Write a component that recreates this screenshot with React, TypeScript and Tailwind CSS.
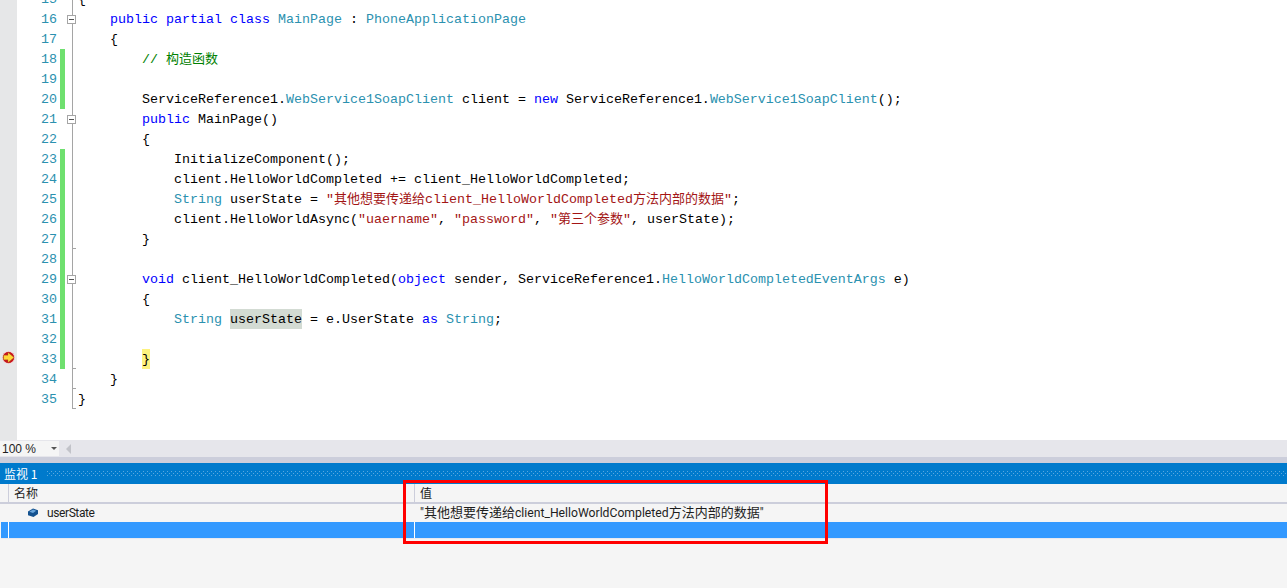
const K = ({ c }: { c: string }) => <span className="text-[#0000ff]">{c}</span>;
const T = ({ c }: { c: string }) => <span className="text-[#2b91af]">{c}</span>;
const S = ({ c }: { c: React.ReactNode }) => <span className="text-[#a31515]">{c}</span>;
const C = ({ c }: { c: string }) => <span className="text-[13px]">{c}</span>;

type Line = { n: number; changed?: boolean; fold?: boolean; tick?: boolean; code: React.ReactNode };

const lines: Line[] = [
  { n: 15, code: <>{"{"}</> },
  { n: 16, fold: true, code: <>{"    "}<K c="public" /> <K c="partial" /> <K c="class" /> <T c="MainPage" /> : <T c="PhoneApplicationPage" /></> },
  { n: 17, code: <>{"    {"}</> },
  { n: 18, changed: true, code: <span className="text-[#008000]">{"        // "}<C c="构造函数" /></span> },
  { n: 19, changed: true, code: "" },
  { n: 20, changed: true, code: <>{"        ServiceReference1."}<T c="WebService1SoapClient" /> client = <K c="new" /> ServiceReference1.<T c="WebService1SoapClient" />();</> },
  { n: 21, fold: true, code: <>{"        "}<K c="public" /> MainPage()</> },
  { n: 22, code: <>{"        {"}</> },
  { n: 23, changed: true, code: <>{"            InitializeComponent();"}</> },
  { n: 24, changed: true, code: <>{"            client.HelloWorldCompleted += client_HelloWorldCompleted;"}</> },
  { n: 25, changed: true, code: <>{"            "}<T c="String" /> userState = <S c={<>"<C c="其他想要传递给" />client_HelloWorldCompleted<C c="方法内部的数据" />"</>} />;</> },
  { n: 26, changed: true, code: <>{"            client.HelloWorldAsync("}<S c={'"uaername"'} />, <S c={'"password"'} />, <S c={<>"<C c="第三个参数" />"</>} />, userState);</> },
  { n: 27, changed: true, tick: true, code: <>{"        }"}</> },
  { n: 28, changed: true, code: "" },
  { n: 29, changed: true, fold: true, code: <>{"        "}<K c="void" /> client_HelloWorldCompleted(<K c="object" /> sender, ServiceReference1.<T c="HelloWorldCompletedEventArgs" /> e)</> },
  { n: 30, changed: true, code: <>{"        {"}</> },
  { n: 31, changed: true, code: <>{"            "}<T c="String" /> <span className="bg-[#d3dbd3] inline-block align-top h-5 leading-[22px]">userState</span> = e.UserState <K c="as" /> <T c="String" />;</> },
  { n: 32, changed: true, code: "" },
  { n: 33, changed: true, tick: true, code: <>{"        "}<span className="bg-[#fdf27f] inline-block align-top h-5 leading-[22px]">{"}"}</span></> },
  { n: 34, tick: true, code: <>{"    }"}</> },
  { n: 35, tick: true, code: <>{"}"}</> },
];

export default function App() {
  return (
    <div className="relative w-[1287px] h-[588px] overflow-hidden bg-white flex flex-col font-['Noto_Sans_CJK_SC',sans-serif]">
      {/* editor */}
      <div className="h-[440px] shrink-0 overflow-hidden flex flex-col">
        <div className="-mt-[11px]">
          {lines.map((l) => (
            <div key={l.n} className="flex h-5 leading-[22px] text-[13.33px] text-black font-['Liberation_Mono','Noto_Sans_CJK_SC',monospace]">
              <div className="w-[17px] shrink-0 bg-[#e6e7e8] relative">
                {l.n === 33 && (
                  <svg viewBox="0 0 13 13" className="absolute left-[2px] top-[2px] w-[13px] h-[13px]">
                    <circle cx="6.5" cy="6.5" r="6.1" fill="#c8161d" stroke="#f6e4e4" strokeWidth="0.8" />
                    <path d="M1.6 4.2h4.4V1.4L12 6.5 6 11.6V8.8H1.6z" fill="#ffd83a" stroke="#8a6a10" strokeWidth="0.3" />
                  </svg>
                )}
              </div>
              <div className="w-[40px] shrink-0 text-right text-[#2b91af]">{l.n}</div>
              <div className="w-[3px] shrink-0" />
              <div className={`w-[5px] shrink-0 ${l.changed ? "bg-[#6fe06f]" : ""}`} />
              <div className="w-[13px] shrink-0 relative">
                <div className={`absolute left-[7px] top-0 w-px bg-[#a5a5a5] ${l.tick ? "h-[19px]" : "h-5"}`} />
                {l.tick && <div className="absolute left-[7px] top-[19px] w-[4px] h-px bg-[#a5a5a5]" />}
                {l.fold && (
                  <div className="absolute left-[2px] top-[6px] w-[9px] h-[9px] bg-white border border-[#a5a5a5] flex items-center justify-center">
                    <div className="w-[5px] h-px bg-[#555555]" />
                  </div>
                )}
              </div>
              <pre className="font-[inherit]">{l.code}</pre>
            </div>
          ))}
        </div>
        <div className="flex-1 w-[17px] bg-[#e6e7e8]" />
      </div>

      {/* horizontal bar */}
      <div className="h-[17px] shrink-0 bg-[#e6e6eb] flex items-center">
        <div className="w-[59px] h-[15px] bg-[#f5f5f5] flex items-center justify-between pl-[2px] pr-[2px] text-[12px] text-[#1e1e1e] font-['Liberation_Sans',sans-serif]">
          <span>100 %</span>
          <div className="w-0 h-0 border-x-[3px] border-x-transparent border-t-[3px] border-t-[#555555]" />
        </div>
        <div className="ml-[7px] w-0 h-0 border-y-[5px] border-y-transparent border-r-[5px] border-r-[#c2c3c9]" />
      </div>
      <div className="h-[6px] shrink-0 bg-[#cccedb]" />

      {/* watch title */}
      <div className="h-[21px] shrink-0 bg-[#007acc] flex items-center text-white text-[12px] pl-[4px] gap-[5px]">
        <span className="w-[38px] shrink-0 whitespace-nowrap">监视 1</span>
        <svg className="flex-1 h-[5px] min-w-0" aria-hidden="true">
          <defs>
            <pattern id="grip" width="4" height="4" patternUnits="userSpaceOnUse">
              <rect x="0" y="0" width="1" height="1" fill="#59a8de" />
              <rect x="2" y="2" width="1" height="1" fill="#59a8de" />
            </pattern>
          </defs>
          <rect width="100%" height="5" fill="url(#grip)" />
        </svg>
      </div>

      {/* watch table */}
      <div className="flex-1 bg-[#f5f5f5] text-[12px] text-[#1e1e1e] font-['Roboto','Noto_Sans_CJK_SC',sans-serif]">
        <div className="h-5 flex border-b-2 border-[#cccedb] leading-5">
          <div className="w-[9px] border-r border-[#cccedb]" />
          <div className="w-[406px] pl-[5px] border-r border-[#cccedb] shrink-0">名称</div>
          <div className="pl-[5px]">值</div>
        </div>
        <div className="h-[18px] flex leading-[18px]">
          <div className="w-[28px] shrink-0" />
          <svg viewBox="0 0 10 9" className="w-[10px] h-[9px] mt-[4px] shrink-0">
            <path d="M0 3.6L5 0.4 10 2.2V6L5.5 9 0 7.2z" fill="#14528f" />
            <path d="M1.4 3.7L5 1.6 8.2 2.8 5 5z" fill="#6aa6dc" />
          </svg>
          <span className="ml-[9px] w-[367px] shrink-0 tracking-[-0.4px]">userState</span>
          <span className="pl-[6px] whitespace-nowrap text-[12.2px]">"<span className="text-[13px]">其他想要传递给</span>client_HelloWorldCompleted<span className="text-[13px]">方法内部的数据</span>"</span>
        </div>
        <div className="h-[17px] flex bg-[#3399ff] ml-px border-b border-[#e9e9f0]">
          <div className="w-[8px] border-r border-white" />
          <div className="w-[406px] border-r border-white" />
        </div>
      </div>

      {/* red annotation */}
      <div className="absolute left-[403px] top-[480px] w-[425px] h-[64px] border-[3px] border-[#ff0000]" />
    </div>
  );
}
